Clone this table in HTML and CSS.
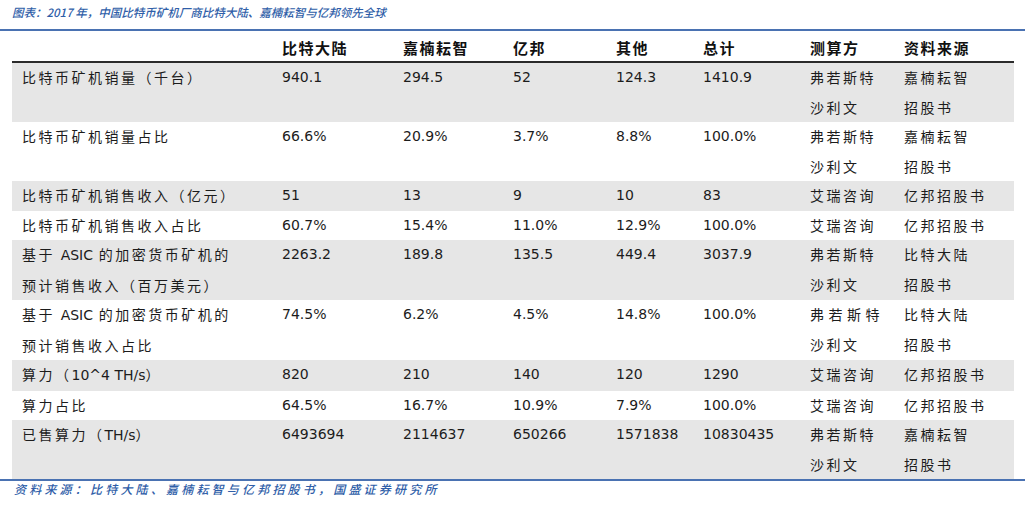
FILE: index.html
```html
<!DOCTYPE html>
<html lang="zh">
<head>
<meta charset="utf-8">
<link rel="stylesheet" href="styles.css">
</head>
<body>
<div class="page">
  <div class="title">图表：2017 年，中国比特币矿机厂商比特大陆、嘉楠耘智与亿邦领先全球</div>
  <div class="rule"></div>
  <table class="data">
    <colgroup>
      <col class="c-label"><col class="c2"><col class="c3"><col class="c4"><col class="c5"><col class="c6"><col class="c7"><col class="c8">
    </colgroup>
    <thead>
      <tr><th></th><th>比特大陆</th><th>嘉楠耘智</th><th>亿邦</th><th>其他</th><th>总计</th><th>测算方</th><th>资料来源</th></tr>
    </thead>
    <tbody>
      <tr class="g"><td class="zh">比特币矿机销量（千台）</td><td>940.1</td><td>294.5</td><td>52</td><td>124.3</td><td>1410.9</td><td class="zh">弗若斯特<br>沙利文</td><td class="zh">嘉楠耘智<br>招股书</td></tr>
      <tr><td class="zh">比特币矿机销量占比</td><td>66.6%</td><td>20.9%</td><td>3.7%</td><td>8.8%</td><td>100.0%</td><td class="zh">弗若斯特<br>沙利文</td><td class="zh">嘉楠耘智<br>招股书</td></tr>
      <tr class="g"><td class="zh">比特币矿机销售收入（亿元）</td><td>51</td><td>13</td><td>9</td><td>10</td><td>83</td><td class="zh">艾瑞咨询</td><td class="zh">亿邦招股书</td></tr>
      <tr><td class="zh">比特币矿机销售收入占比</td><td>60.7%</td><td>15.4%</td><td>11.0%</td><td>12.9%</td><td>100.0%</td><td class="zh">艾瑞咨询</td><td class="zh">亿邦招股书</td></tr>
      <tr class="g"><td class="zh">基于 <span class="lat">ASIC</span> 的加密货币矿机的<br>预计销售收入（百万美元）</td><td>2263.2</td><td>189.8</td><td>135.5</td><td>449.4</td><td>3037.9</td><td class="zh">弗若斯特<br>沙利文</td><td class="zh">比特大陆<br>招股书</td></tr>
      <tr><td class="zh">基于 <span class="lat">ASIC</span> 的加密货币矿机的<br>预计销售收入占比</td><td>74.5%</td><td>6.2%</td><td>4.5%</td><td>14.8%</td><td>100.0%</td><td class="zh"><span class="wide">弗若斯特</span><br>沙利文</td><td class="zh">比特大陆<br>招股书</td></tr>
      <tr class="g"><td class="zh">算力（<span class="lat">10^4 TH/s</span>）</td><td>820</td><td>210</td><td>140</td><td>120</td><td>1290</td><td class="zh">艾瑞咨询</td><td class="zh">亿邦招股书</td></tr>
      <tr><td class="zh">算力占比</td><td>64.5%</td><td>16.7%</td><td>10.9%</td><td>7.9%</td><td>100.0%</td><td class="zh">艾瑞咨询</td><td class="zh">亿邦招股书</td></tr>
      <tr class="g"><td class="zh">已售算力（<span class="lat">TH/s</span>）</td><td>6493694</td><td>2114637</td><td>650266</td><td>1571838</td><td>10830435</td><td class="zh">弗若斯特<br>沙利文</td><td class="zh">嘉楠耘智<br>招股书</td></tr>
    </tbody>
  </table>
  <div class="rule bottom"></div>
  <div class="source">资料来源：比特大陆、嘉楠耘智与亿邦招股书，国盛证券研究所</div>
</div>
</body>
</html>
```

FILE: styles.css
```css
html, body {
  margin: 0;
  padding: 0;
  background: #ffffff;
}

.page {
  width: 1035px;
  font-family: "DejaVu Sans", "Noto Sans CJK SC", sans-serif;
  color: #1c1c1c;
}

.title {
  height: 29px;
  line-height: 24px;
  padding-left: 12px;
  font-family: "Noto Sans CJK SC", sans-serif;
  font-size: 11.5px;
  font-weight: 500;
  font-style: italic;
  color: #2f5ea8;
  box-sizing: border-box;
}

.rule {
  width: 1025px;
  height: 2px;
  background: #4a72b2;
}

.data {
  margin-left: 12px;
  width: 1002px;
  table-layout: fixed;
  border-collapse: collapse;
  border-spacing: 0;
}

.c-label { width: 260px; }
.c2 { width: 121px; }
.c3 { width: 110px; }
.c4 { width: 103px; }
.c5 { width: 87px; }
.c6 { width: 107px; }
.c7 { width: 94px; }
.c8 { width: 120px; }

.data th {
  height: 31px;
  padding: 2px 0 0 10px;
  box-sizing: border-box;
  text-align: left;
  font-family: "Noto Sans CJK SC", sans-serif;
  font-weight: 700;
  font-size: 15px;
  letter-spacing: 1.5px;
  color: #111;
  border-bottom: 2px solid #2b2b2b;
  vertical-align: middle;
}

.data td {
  padding: 0 0 0 10px;
  font-size: 14px;
  line-height: 29.5px;
  vertical-align: top;
  white-space: nowrap;
}

.data tr.g td {
  background: #e6e6e6;
}

.data td.zh {
  font-family: "Noto Sans CJK SC", sans-serif;
  letter-spacing: 2.5px;
}

.data td.zh .lat {
  font-family: "DejaVu Sans", sans-serif;
  letter-spacing: 0;
}

.data td.zh .wide {
  letter-spacing: 4.5px;
}

.source {
  padding-left: 14px;
  line-height: 16px;
  font-family: "Noto Sans CJK SC", sans-serif;
  font-size: 12px;
  font-weight: 500;
  font-style: italic;
  letter-spacing: 3.2px;
  color: #2f5ea8;
}
```
